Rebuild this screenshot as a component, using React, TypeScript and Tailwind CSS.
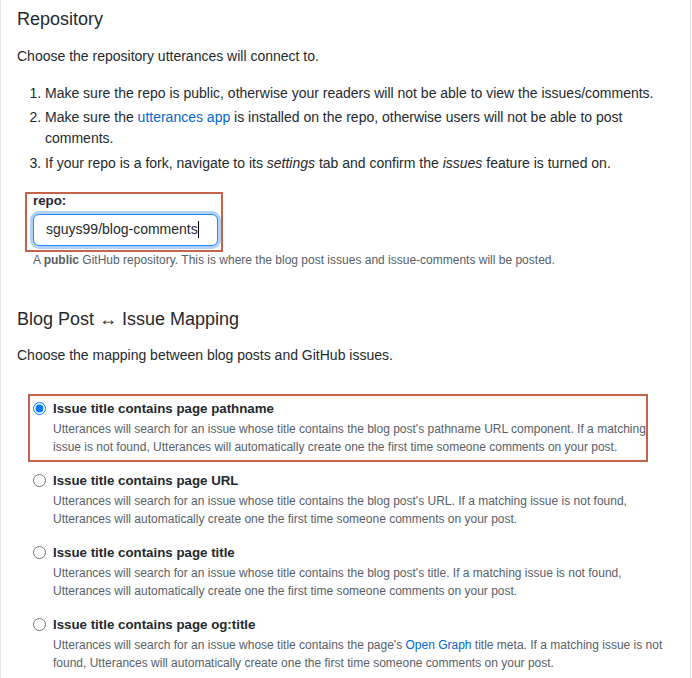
import React from 'react';

const font = { fontFamily: '"Liberation Sans", Arial, sans-serif' };

// mapping options shown under "Blog Post ↔ Issue Mapping"
const mappings = [
  {
    id: 'pathname',
    title: 'Issue title contains page pathname',
    desc: (
      <>
        Utterances will search for an issue whose title contains the blog post's pathname URL component. If a matching
        issue is not found, Utterances will automatically create one the first time someone comments on your post.
      </>
    ),
  },
  {
    id: 'url',
    title: 'Issue title contains page URL',
    desc: (
      <>
        Utterances will search for an issue whose title contains the blog post's URL. If a matching issue is not found,
        Utterances will automatically create one the first time someone comments on your post.
      </>
    ),
  },
  {
    id: 'title',
    title: 'Issue title contains page title',
    desc: (
      <>
        Utterances will search for an issue whose title contains the blog post's title. If a matching issue is not found,
        Utterances will automatically create one the first time someone comments on your post.
      </>
    ),
  },
  {
    id: 'og:title',
    title: 'Issue title contains page og:title',
    desc: (
      <>
        Utterances will search for an issue whose title contains the page's{' '}
        <a className="text-[#0366d6]">Open Graph</a> title meta. If a matching issue is not found, Utterances will
        automatically create one the first time someone comments on your post.
      </>
    ),
  },
];

export default function App() {
  const selected = 'pathname';

  return (
    <div className="w-[691px] min-h-[678px] bg-white border-x border-[#e1e4e8] px-4 pt-[8px] text-[14px] text-[#24292e]" style={font}>
      {/* --- REPOSITORY --- */}
      <h3 className="text-[18px] leading-[23px] text-[#24292e]">Repository</h3>
      <p className="mt-[15px] leading-[21px]">Choose the repository utterances will connect to.</p>

      <ol className="mt-4 list-decimal pl-[28px] leading-[21px]">
        <li>Make sure the repo is public, otherwise your readers will not be able to view the issues/comments.</li>
        <li className="mt-[3px]">
          Make sure the <a className="text-[#0366d6]">utterances app</a> is installed on the repo, otherwise users will not be able to post
          comments.
        </li>
        <li className="mt-[3.5px]">
          If your repo is a fork, navigate to its <em>settings</em> tab and confirm the <em>issues</em> feature is turned on.
        </li>
      </ol>

      <div className="pl-4 mt-[16.5px]">
        <div className="relative w-[185px]">
          <label className="block font-bold text-[13.3px] leading-[21px]">repo:</label>
          <div className="mt-[2.5px] h-[32px] flex items-center px-3 border border-[#2188ff] rounded-md shadow-[0_0_0_3px_rgba(3,102,214,0.3)] bg-white">
            <span className="text-[14px]">sguys99/blog-comments</span>
            <span className="w-px h-[17px] bg-black"></span>
          </div>
          {/* annotation box */}
          <span className="absolute left-[-8px] top-[2px] w-[198px] h-[60px] border-2 border-[#c5644b] pointer-events-none"></span>
        </div>
        <p className="mt-[5px] text-[12px] leading-[18px] text-[#586069]">
          A <strong>public</strong> GitHub repository. This is where the blog post issues and issue-comments will be posted.
        </p>
      </div>

      {/* --- MAPPING --- */}
      <h3 className="mt-[39.5px] text-[18px] leading-[23px] text-[#24292e]">Blog Post ↔ Issue Mapping</h3>
      <p className="mt-[14px] leading-[21px]">Choose the mapping between blog posts and GitHub issues.</p>

      <fieldset className="mt-[32.5px] pl-4 flex flex-col gap-[15px]">
        {mappings.map((m) => (
          <div key={m.id} className="relative flex items-start">
            <input
              type="radio"
              name="mapping"
              value={m.id}
              defaultChecked={m.id === selected}
              className="m-0 mt-[3.5px] w-[13px] h-[13px] shrink-0"
            />
            <div className="ml-[7px]">
              <div className="font-bold text-[13.3px] leading-[20px]">{m.title}</div>
              <p className="mt-px text-[12px] leading-[18px] text-[#586069]">{m.desc}</p>
            </div>
            {m.id === selected && (
              <span className="absolute left-[-5px] top-[-5px] w-[620px] h-[68px] border-2 border-[#c5644b] pointer-events-none"></span>
            )}
          </div>
        ))}
      </fieldset>
    </div>
  );
}
